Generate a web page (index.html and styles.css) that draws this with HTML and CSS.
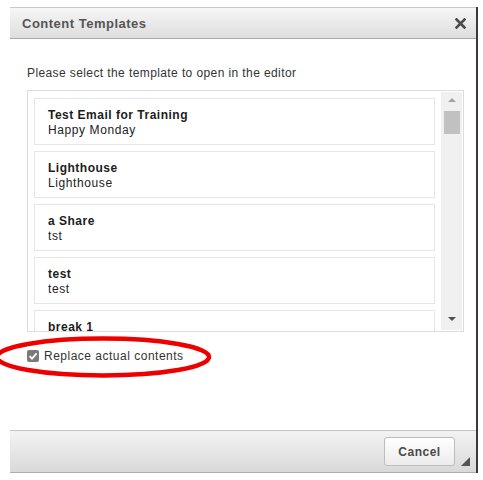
FILE: index.html
```html
<!DOCTYPE html>
<html lang="en">
<head>
    <meta charset="UTF-8">
    <meta name="viewport" content="width=device-width, initial-scale=1.0">
    <title>Content Templates</title>
    <link rel="stylesheet" href="styles.css">
</head>
<body>
    <div class="dialog">
        <div class="titlebar">
            <span class="title">Content Templates</span>
            <svg class="close" width="11" height="11" viewBox="0 0 11 11">
                <path d="M1.5 1.5 L9.5 9.5 M9.5 1.5 L1.5 9.5" stroke="#4a4a4a" stroke-width="2.6" stroke-linecap="square"/>
            </svg>
        </div>
        <div class="content">
            <p class="intro">Please select the template to open in the editor</p>
            <div class="list">
                <div class="items">
                    <div class="item"><b>Test Email for Training</b><span>Happy Monday</span></div>
                    <div class="item"><b>Lighthouse</b><span>Lighthouse</span></div>
                    <div class="item"><b>a Share</b><span>tst</span></div>
                    <div class="item"><b>test</b><span>test</span></div>
                    <div class="item"><b>break 1</b><span>break</span></div>
                </div>
                <div class="scrollbar">
                    <span class="arrow up"></span>
                    <span class="thumb"></span>
                    <span class="arrow down"></span>
                </div>
            </div>
            <label class="replace">
                <span class="check">
                    <svg width="12" height="12" viewBox="0 0 12 12">
                        <path d="M2.6 6.2 L5 8.6 L9.6 3.4" fill="none" stroke="#fff" stroke-width="1.8"/>
                    </svg>
                </span>
                Replace actual contents
            </label>
            <!-- red annotation ring -->
            <svg class="ring" width="230" height="48" viewBox="0 0 230 48">
                <ellipse cx="112" cy="23" rx="106" ry="18.5" fill="none" stroke="#ee0000" stroke-width="4.5"/>
            </svg>
        </div>
        <div class="footer">
            <button class="cancel">Cancel</button>
            <span class="grip"></span>
        </div>
    </div>
</body>
</html>
```

FILE: styles.css
```css
body {
    margin: 0;
    padding: 0;
    background-color: #fff;
    font-family: "Liberation Sans", Arial, sans-serif;
    color: #222;
}

.dialog {
    margin: 7px 0 0 10px;
    width: 466px;
    border-right: 2px solid #3a3a3a;
    background-color: #fff;
}

.titlebar {
    height: 30px;
    border-top: 1px solid #c9c9c9;
    border-bottom: 1px solid #a9a9a9;
    background: linear-gradient(#f6f6f6, #dedede);
    display: flex;
    align-items: center;
    justify-content: space-between;
    padding: 0 10px 0 12px;
}

.title {
    font-size: 13px;
    font-weight: bold;
    letter-spacing: 0.5px;
    color: #555;
}

.close {
    margin-top: 1px;
}

.content {
    position: relative;
    height: 391px;
    padding: 0 12px 0 17px;
}

.intro {
    margin: 0;
    padding-top: 28px;
    font-size: 12px;
    line-height: 13px;
    letter-spacing: 0.4px;
    color: #333;
}

.list {
    margin-top: 10px;
    height: 240px;
    border: 1px solid #dcdcdc;
    display: flex;
}

.items {
    flex: 1;
    overflow: hidden;
    padding: 7px 6px 0 6px;
}

.item {
    border: 1px solid #e6e6e6;
    margin-bottom: 6px;
    padding: 9px 0 0 13px;
    box-sizing: border-box;
    height: 47px;
    font-size: 12px;
    line-height: 15px;
    letter-spacing: 0.6px;
    color: #222;
}

.item b,
.item span {
    display: block;
}

.item b {
    letter-spacing: 0.5px;
    color: #1c1c1c;
}

.scrollbar {
    width: 21px;
    margin: 1px 1px 1px 0;
    background-color: #f0f0f0;
    display: flex;
    flex-direction: column;
    align-items: center;
}

.arrow {
    width: 0;
    height: 0;
    border-left: 4px solid transparent;
    border-right: 4px solid transparent;
}

.arrow.up {
    margin-top: 6px;
    border-bottom: 4px solid #a3a3a3;
}

.arrow.down {
    margin-top: auto;
    margin-bottom: 9px;
    border-top: 4px solid #505050;
}

.thumb {
    margin-top: 9px;
    width: 16px;
    height: 23px;
    background-color: #c1c1c1;
}

.replace {
    display: flex;
    align-items: center;
    margin-top: 17px;
    font-size: 12px;
    letter-spacing: 0.5px;
    color: #333;
}

.check {
    width: 12px;
    height: 12px;
    border-radius: 2px;
    background-color: #7a7a7a;
    margin-right: 5px;
    display: flex;
}

.ring {
    position: absolute;
    left: -19px;
    top: 295px;
}

.footer {
    height: 41px;
    border-top: 1px solid #c4c4c4;
    border-bottom: 1px solid #aeaeae;
    background: linear-gradient(#f3f3f3, #d9d9d9);
    display: flex;
    align-items: center;
    justify-content: flex-end;
    padding-right: 21px;
    position: relative;
}

.cancel {
    width: 71px;
    height: 29px;
    border: 1px solid #bdbdbd;
    border-radius: 3px;
    background: linear-gradient(#ffffff, #ececec);
    font-family: "Liberation Sans", Arial, sans-serif;
    font-size: 12px;
    font-weight: bold;
    letter-spacing: 0.5px;
    color: #4a4a4a;
    cursor: pointer;
}

.grip {
    position: absolute;
    right: 6px;
    bottom: 6px;
    width: 0;
    height: 0;
    border-left: 9px solid transparent;
    border-bottom: 9px solid #555;
}
```
